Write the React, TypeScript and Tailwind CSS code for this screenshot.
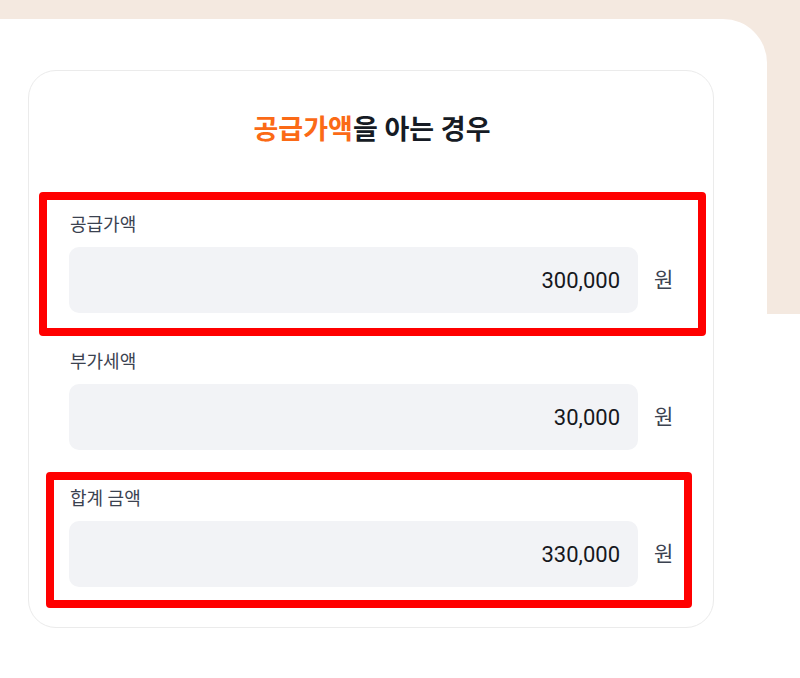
const fields = [
  { label: "공급가액", value: "300,000", mark: "a" },
  { label: "부가세액", value: "30,000", mark: "" },
  { label: "합계 금액", value: "330,000", mark: "b" },
];

function Field({ label, value, mark }: { label: string; value: string; mark: string }) {
  return (
    <div className="relative">
      {/* red annotation boxes */}
      {mark === "a" && (
        <div className="pointer-events-none absolute -left-[30px] -right-[31px] -top-[21px] -bottom-[23px] rounded-[4px] border-8 border-[#ff0000]" />
      )}
      {mark === "b" && (
        <div className="pointer-events-none absolute -left-[23px] -right-[17px] -top-[15px] -bottom-[21px] rounded-[4px] border-8 border-[#ff0000]" />
      )}
      <div className="mb-[10px] pl-px text-[18px] leading-6 text-[#3b4250]">{label}</div>
      <div className="flex items-center gap-[16px]">
        <div className="flex h-[66px] flex-1 items-center justify-end rounded-[10px] bg-[#f2f3f6] pr-[18px] text-[22px] text-[#16181d]">
          {value}
        </div>
        <span className="w-[21px] text-[21px] leading-6 text-[#3b4250]">원</span>
      </div>
    </div>
  );
}

export default function App() {
  return (
    <div
      className="min-h-screen bg-[linear-gradient(to_bottom,#f4e9e0_314px,#ffffff_314px)] pt-[19px] pr-[33px]"
      style={{ fontFamily: '"Roboto", "Noto Sans CJK KR", sans-serif' }}
    >
      <div className="rounded-tr-[44px] bg-white pt-[51px] pl-[28px] pr-[53px] pb-[51px]">
        <div className="rounded-[28px] border border-[#ebebeb] pl-[40px] pr-[38px] pt-[43px] pb-[40px]">
          <h2 className="mb-[67px] text-center text-[27px] font-bold leading-8 text-[#161b24]">
            <span className="text-[#fb6a16]">공급가액</span>을 아는 경우
          </h2>
          <div className="flex flex-col gap-[37px]">
            {fields.map((f) => (
              <Field key={f.label} {...f} />
            ))}
          </div>
        </div>
      </div>
    </div>
  );
}
